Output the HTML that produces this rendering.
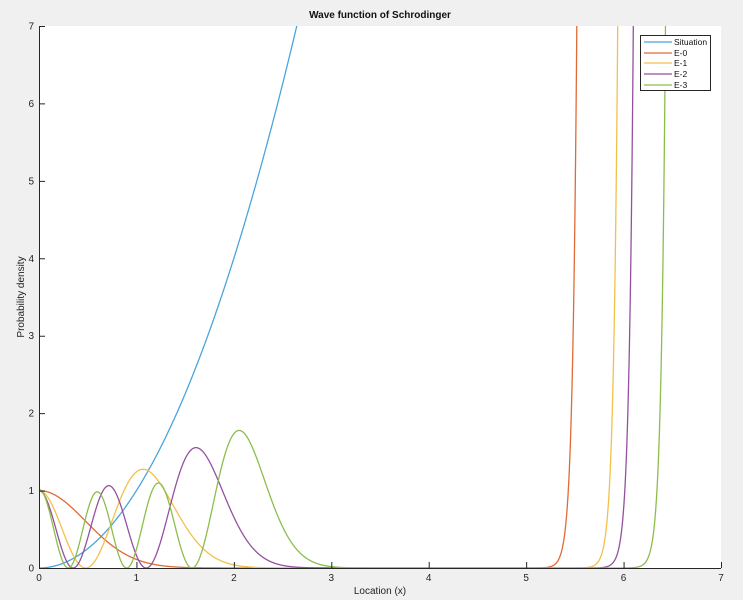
<!DOCTYPE html>
<html><head><meta charset="utf-8"><style>
body{margin:0;background:#f0f0f0;width:743px;height:600px;overflow:hidden}
svg{display:block;font-family:"Liberation Sans",sans-serif}
</style></head><body>
<svg id="s" width="743" height="600" viewBox="0 0 743 600">
<defs><clipPath id="cp"><rect x="39" y="26" width="682" height="543"/></clipPath></defs>
<rect x="0" y="0" width="743" height="600" fill="#f0f0f0"/>
<rect x="39" y="26" width="682" height="542" fill="#fff"/>
<text x="380" y="18" font-size="10" font-weight="bold" text-anchor="middle" fill="#111">Wave function of Schrodinger</text>
<text x="380" y="594" font-size="10" text-anchor="middle" fill="#222">Location (x)</text>
<text transform="translate(24,297) rotate(-90)" font-size="10" text-anchor="middle" fill="#222">Probability density</text>
<g id="curves" fill="none" stroke-width="1.3" clip-path="url(#cp)"></g>
<g id="axes" stroke="#262626" stroke-width="1" fill="none"></g>
<g id="labels" font-size="10" fill="#262626"></g>
<rect x="640.5" y="35.5" width="70" height="55" fill="#fff" stroke="#262626"/>
<g stroke-width="1.2">
<line x1="644" y1="42" x2="672" y2="42" stroke="#4aa3dc"/>
<line x1="644" y1="53" x2="672" y2="53" stroke="#e06a35"/>
<line x1="644" y1="63" x2="672" y2="63" stroke="#f2c04a"/>
<line x1="644" y1="74" x2="672" y2="74" stroke="#94509f"/>
<line x1="644" y1="85" x2="672" y2="85" stroke="#8cbd4b"/>
</g>
<g font-size="8.5" fill="#111">
<text x="674" y="45">Situation</text>
<text x="674" y="56">E-0</text>
<text x="674" y="66">E-1</text>
<text x="674" y="77">E-2</text>
<text x="674" y="88">E-3</text>
</g>
</svg>
<script>
var L=39,R=721,T=26,B=568,sx=(R-L)/7,sy=(B-T)/7;
function X(x){return L+x*sx} function Y(y){return B-Math.min(y,7.3)*sy}
var c=2.2;
function div(x,xe){return 7*Math.exp((x-xe)/0.045)}
var fs=[
 ["#4aa3dc",function(x){return x*x}],
 ["#e06a35",function(x){return Math.exp(-c*x*x)+div(x,5.52)}],
 ["#f2c04a",function(x){var p=1-x*x/0.23;return p*p*Math.exp(-c*x*x)+div(x,5.94)}],
 ["#94509f",function(x){var q=x*x,p=(1-q/0.1225)*(1-q/1.21);return p*p*Math.exp(-2.25*q)+div(x,6.1)}],
 ["#8cbd4b",function(x){var q=x*x,p=(1-q/0.09)*(1-q/0.81)*(1-q/2.465);return p*p*Math.exp(-2.2*q)*(1+0.1*Math.exp(-Math.pow(x-1,2)*2))+div(x,6.43)}]
];
var g=document.getElementById('curves'),ns="http://www.w3.org/2000/svg";
fs.forEach(function(f){var d="";for(var i=0;i<=7000;i++){var x=i/1000,y=f[1](x);d+=(d?"L":"M")+X(x).toFixed(2)+","+Y(y).toFixed(2);if(y>7.3)break;}
 var p=document.createElementNS(ns,"path");p.setAttribute("d",d);p.setAttribute("stroke",f[0]);g.appendChild(p);});
var a=document.getElementById('axes'),lb=document.getElementById('labels'),h="M"+L+".5,"+T+"V"+(B+.5)+"H"+R;
for(var i=0;i<=7;i++){h+="M"+(X(i)+.5)+","+B+"v-6M"+L+","+(Y(i)+.5)+"h6";
 var t=document.createElementNS(ns,"text");t.setAttribute("x",X(i));t.setAttribute("y",581);t.setAttribute("text-anchor","middle");t.textContent=i;lb.appendChild(t);
 t=document.createElementNS(ns,"text");t.setAttribute("x",34);t.setAttribute("y",Y(i)+3.5);t.setAttribute("text-anchor","end");t.textContent=i;lb.appendChild(t);}
var p=document.createElementNS(ns,"path");p.setAttribute("d",h);a.appendChild(p);
</script>
</body></html>
